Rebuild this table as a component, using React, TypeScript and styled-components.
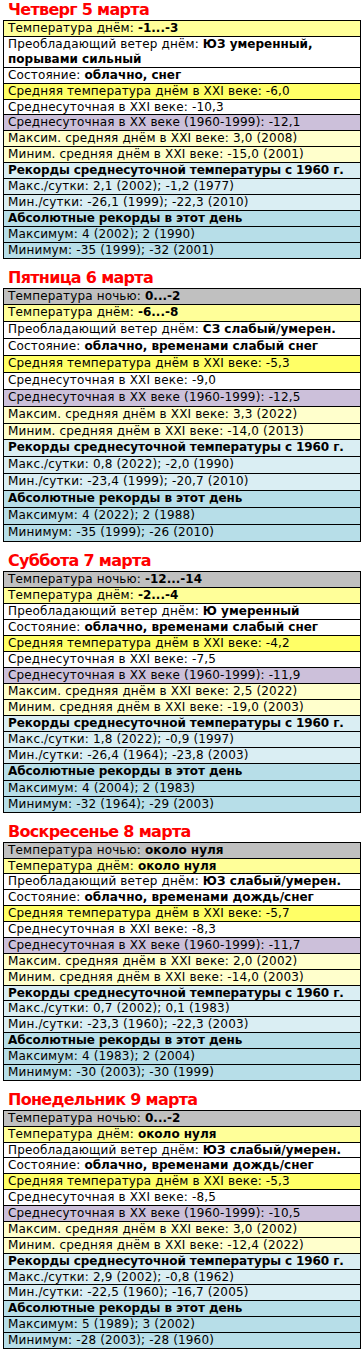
import React from "react";
import styled, { createGlobalStyle } from "styled-components";

const GlobalStyle = createGlobalStyle`
  html, body { margin: 0; padding: 0; background: #ffffff; }
  body { font-family: "DejaVu Sans", Verdana, sans-serif; color: #000; }
`;

type Kind = "night" | "day" | "plain" | "avg" | "xx" | "ext" | "rec" | "abs";

const bg: Record<Kind, string> = {
  night: "#c0c0c0",
  day: "#ffff99",
  plain: "#ffffff",
  avg: "#ffff66",
  xx: "#ccc0da",
  ext: "#ffffcc",
  rec: "#daeef3",
  abs: "#b7dee8",
};

type Row = { kind: Kind; label: string; value?: string; header?: boolean };
type Day = { title: string; line: number; rows: Row[] };

const days: Day[] = [
  {
    title: "Четверг 5 марта",
    line: 14.9,
    rows: [
      { kind: "day", label: "Температура днём: ", value: "-1...-3" },
      { kind: "plain", label: "Преобладающий ветер днём: ", value: "ЮЗ умеренный, порывами сильный" },
      { kind: "plain", label: "Состояние: ", value: "облачно, снег" },
      { kind: "avg", label: "Средняя температура днём в XXI веке: -6,0" },
      { kind: "plain", label: "Среднесуточная в XXI веке: -10,3" },
      { kind: "xx", label: "Среднесуточная в XX веке (1960-1999): -12,1" },
      { kind: "ext", label: "Максим. средняя днём в XXI веке: 3,0 (2008)" },
      { kind: "ext", label: "Миним. средняя днём в XXI веке: -15,0 (2001)" },
      { kind: "rec", label: "Рекорды среднесуточной температуры с 1960 г.", header: true },
      { kind: "rec", label: "Макс./сутки: 2,1 (2002); -1,2 (1977)" },
      { kind: "rec", label: "Мин./сутки: -26,1 (1999); -22,3 (2010)" },
      { kind: "abs", label: "Абсолютные рекорды в этот день", header: true },
      { kind: "abs", label: "Максимум: 4 (2002); 2 (1990)" },
      { kind: "abs", label: "Минимум: -35 (1999); -32 (2001)" },
    ],
  },
  {
    title: "Пятница 6 марта",
    line: 15.87,
    rows: [
      { kind: "night", label: "Температура ночью: ", value: "0...-2" },
      { kind: "day", label: "Температура днём: ", value: "-6...-8" },
      { kind: "plain", label: "Преобладающий ветер днём: ", value: "СЗ слабый/умерен." },
      { kind: "plain", label: "Состояние: ", value: "облачно, временами слабый снег" },
      { kind: "avg", label: "Средняя температура днём в XXI веке: -5,3" },
      { kind: "plain", label: "Среднесуточная в XXI веке: -9,0" },
      { kind: "xx", label: "Среднесуточная в XX веке (1960-1999): -12,5" },
      { kind: "ext", label: "Максим. средняя днём в XXI веке: 3,3 (2022)" },
      { kind: "ext", label: "Миним. средняя днём в XXI веке: -14,0 (2013)" },
      { kind: "rec", label: "Рекорды среднесуточной температуры с 1960 г.", header: true },
      { kind: "rec", label: "Макс./сутки: 0,8 (2022); -2,0 (1990)" },
      { kind: "rec", label: "Мин./сутки: -23,4 (1999); -20,7 (2010)" },
      { kind: "abs", label: "Абсолютные рекорды в этот день", header: true },
      { kind: "abs", label: "Максимум: 4 (2022); 2 (1988)" },
      { kind: "abs", label: "Минимум: -35 (1999); -26 (2010)" },
    ],
  },
  {
    title: "Суббота 7 марта",
    line: 15.07,
    rows: [
      { kind: "night", label: "Температура ночью: ", value: "-12...-14" },
      { kind: "day", label: "Температура днём: ", value: "-2...-4" },
      { kind: "plain", label: "Преобладающий ветер днём: ", value: "Ю умеренный" },
      { kind: "plain", label: "Состояние: ", value: "облачно, временами слабый снег" },
      { kind: "avg", label: "Средняя температура днём в XXI веке: -4,2" },
      { kind: "plain", label: "Среднесуточная в XXI веке: -7,5" },
      { kind: "xx", label: "Среднесуточная в XX веке (1960-1999): -11,9" },
      { kind: "ext", label: "Максим. средняя днём в XXI веке: 2,5 (2022)" },
      { kind: "ext", label: "Миним. средняя днём в XXI веке: -19,0 (2003)" },
      { kind: "rec", label: "Рекорды среднесуточной температуры с 1960 г.", header: true },
      { kind: "rec", label: "Макс./сутки: 1,8 (2022); -0,9 (1997)" },
      { kind: "rec", label: "Мин./сутки: -26,4 (1964); -23,8 (2003)" },
      { kind: "abs", label: "Абсолютные рекорды в этот день", header: true },
      { kind: "abs", label: "Максимум: 4 (2004); 2 (1983)" },
      { kind: "abs", label: "Минимум: -32 (1964); -29 (2003)" },
    ],
  },
  {
    title: "Воскресенье 8 марта",
    line: 14.87,
    rows: [
      { kind: "night", label: "Температура ночью: ", value: "около нуля" },
      { kind: "day", label: "Температура днём: ", value: "около нуля" },
      { kind: "plain", label: "Преобладающий ветер днём: ", value: "ЮЗ слабый/умерен." },
      { kind: "plain", label: "Состояние: ", value: "облачно, временами дождь/снег" },
      { kind: "avg", label: "Средняя температура днём в XXI веке: -5,7" },
      { kind: "plain", label: "Среднесуточная в XXI веке: -8,3" },
      { kind: "xx", label: "Среднесуточная в XX веке (1960-1999): -11,7" },
      { kind: "ext", label: "Максим. средняя днём в XXI веке: 2,0 (2002)" },
      { kind: "ext", label: "Миним. средняя днём в XXI веке: -14,0 (2003)" },
      { kind: "rec", label: "Рекорды среднесуточной температуры с 1960 г.", header: true },
      { kind: "rec", label: "Макс./сутки: 0,7 (2002); 0,1 (1983)" },
      { kind: "rec", label: "Мин./сутки: -23,3 (1960); -22,3 (2003)" },
      { kind: "abs", label: "Абсолютные рекорды в этот день", header: true },
      { kind: "abs", label: "Максимум: 4 (1983); 2 (2004)" },
      { kind: "abs", label: "Минимум: -30 (2003); -30 (1999)" },
    ],
  },
  {
    title: "Понедельник 9 марта",
    line: 14.87,
    rows: [
      { kind: "night", label: "Температура ночью: ", value: "0...-2" },
      { kind: "day", label: "Температура днём: ", value: "около нуля" },
      { kind: "plain", label: "Преобладающий ветер днём: ", value: "ЮЗ слабый/умерен." },
      { kind: "plain", label: "Состояние: ", value: "облачно, временами дождь/снег" },
      { kind: "avg", label: "Средняя температура днём в XXI веке: -5,3" },
      { kind: "plain", label: "Среднесуточная в XXI веке: -8,5" },
      { kind: "xx", label: "Среднесуточная в XX веке (1960-1999): -10,5" },
      { kind: "ext", label: "Максим. средняя днём в XXI веке: 3,0 (2002)" },
      { kind: "ext", label: "Миним. средняя днём в XXI веке: -12,4 (2022)" },
      { kind: "rec", label: "Рекорды среднесуточной температуры с 1960 г.", header: true },
      { kind: "rec", label: "Макс./сутки: 2,9 (2002); -0,8 (1962)" },
      { kind: "rec", label: "Мин./сутки: -22,5 (1960); -16,7 (2005)" },
      { kind: "abs", label: "Абсолютные рекорды в этот день", header: true },
      { kind: "abs", label: "Максимум: 5 (1989); 3 (2002)" },
      { kind: "abs", label: "Минимум: -28 (2003); -28 (1960)" },
    ],
  },
];

const Page = styled.div`
  display: flex;
  flex-direction: column;
  padding: 0 1px 0 3px;
  width: 358px;
`;

const DaySection = styled.section<{ $first: boolean }>`
  display: flex;
  flex-direction: column;
  margin-top: ${(p) => (p.$first ? "1px" : "10px")};
`;

const DayTitle = styled.h2`
  margin: 0 0 0 5px;
  padding-bottom: 1px;
  font-family: "DejaVu Sans", Verdana, sans-serif;
  font-size: 16px;
  line-height: 18px;
  letter-spacing: -0.7px;
  font-weight: bold;
  color: #ff0000;
`;

const Table = styled.div`
  display: flex;
  flex-direction: column;
  border: 1px solid #000;
  border-bottom: none;
`;

const Cell = styled.div<{ $kind: Kind; $header?: boolean; $line: number }>`
  background: ${(p) => bg[p.$kind]};
  border-bottom: 1px solid #000;
  padding: 0 4px;
  font-size: 12px;
  line-height: ${(p) => p.$line}px;
  letter-spacing: ${(p) => (p.$header ? "-0.1px" : "0.15px")};
  font-weight: ${(p) => (p.$header ? "bold" : "normal")};
`;

const Value = styled.b`
  font-weight: bold;
  letter-spacing: 0;
`;

export default function App() {
  return (
    <>
      <GlobalStyle />
      <Page>
        {days.map((d, i) => (
          <DaySection key={d.title} $first={i === 0}>
            <DayTitle>{d.title}</DayTitle>
            <Table>
              {d.rows.map((r, j) => (
                <Cell key={j} $kind={r.kind} $header={r.header} $line={d.line}>
                  {r.label}
                  {r.value && <Value>{r.value}</Value>}
                </Cell>
              ))}
            </Table>
          </DaySection>
        ))}
      </Page>
    </>
  );
}
